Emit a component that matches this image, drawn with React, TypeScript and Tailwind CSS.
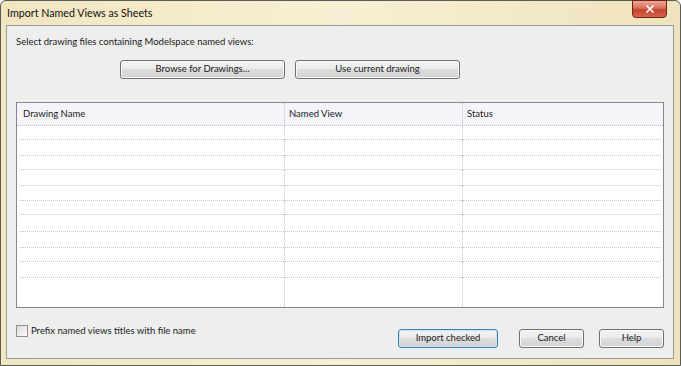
import { X } from 'lucide-react'

const rows = [14, 16, 14, 16, 15, 14, 17, 16, 14, 16]

function WinButton({ label, className = '', focused = false }: { label: string; className?: string; focused?: boolean }) {
  return (
    <div
      className={`h-[19px] rounded-[3px] border flex items-center justify-center text-[9.5px] text-[#1a1a1a] bg-[linear-gradient(#f4f4f4_0%,#ebebeb_45%,#dddddd_50%,#d2d2d2_100%)] ${
        focused ? 'border-[#3c7fb1] shadow-[inset_0_0_0_1px_#c8e6f8]' : 'border-[#707070] shadow-[inset_0_0_0_1px_#fbfbfb]'
      } ${className}`}
    >
      {label}
    </div>
  )
}

export default function App() {
  return (
    <div className="w-[681px] h-[366px] bg-white overflow-hidden" style={{ fontFamily: 'Lato, "Open Sans", sans-serif' }}>
      <div className="w-[681px] h-[366px] flex flex-col rounded-t-[6px] border border-[#5b5b5b] bg-[linear-gradient(90deg,#f1e6c0_0%,#f8f0d4_50%,#efe3bb_100%)]">
        {/* Title bar */}
        <div className="h-[24px] flex justify-between shrink-0">
          <span className="self-center pl-[6px] pt-[1px] text-[10.7px] text-[#111]">Import Named Views as Sheets</span>
          <div className="mr-[13px] w-[35px] h-[18px] -mt-px rounded-b-[4px] border border-[#6e2518] bg-[linear-gradient(#eaa896_0%,#d8705a_45%,#c4432c_55%,#d6654c_100%)] flex items-center justify-center">
            <X size={12} strokeWidth={3.5} className="text-white" />
          </div>
        </div>

        {/* Client area */}
        <div className="flex-1 ml-[5px] mr-[6px] mb-[6px] border border-[#9a9a9a] bg-[#eeeeee] flex flex-col px-[9px]">
          <p className="mt-[9px] h-[14px] leading-[14px] text-[9.5px] text-[#1a1a1a]">
            Select drawing files containing Modelspace named views:
          </p>

          <div className="mt-[11px] flex gap-[10px] pl-[104px]">
            <WinButton label="Browse for Drawings..." className="w-[165px]" />
            <WinButton label="Use current drawing" className="w-[165px]" />
          </div>

          {/* Table */}
          <div className="mt-[23px] h-[206px] border border-[#828790] bg-white flex flex-col">
            <div className="h-[23px] flex text-[9.5px] text-[#1a1a1a] bg-[#f4f4fa] border-b border-dotted border-[#bdbdc8] shrink-0">
              <div className="w-[267px] pl-[6px] flex items-center">Drawing Name</div>
              <div className="w-[178px] pl-[4px] flex items-center border-l border-dotted border-[#c4c4c4]">Named View</div>
              <div className="flex-1 pl-[4px] flex items-center border-l border-dotted border-[#c4c4c4]">Status</div>
            </div>
            <div className="flex-1 flex flex-col">
              {rows.map((h, i) => (
                <div key={i} className="flex" style={{ height: h }}>
                  <div className="w-[267px] pl-[3px]">
                    <div className="h-full border-b border-dotted border-[#c8c8c8]" />
                  </div>
                  <div className="w-[178px] border-l border-dotted border-[#c8c8c8]">
                    <div className="h-full border-b border-dotted border-[#c8c8c8]" />
                  </div>
                  <div className="flex-1 pr-[2px] border-l border-dotted border-[#c8c8c8]">
                    <div className="h-full border-b border-dotted border-[#c8c8c8]" />
                  </div>
                </div>
              ))}
              <div className="flex flex-1">
                <div className="w-[267px]" />
                <div className="w-[178px] border-l border-dotted border-[#c8c8c8]" />
                <div className="flex-1 border-l border-dotted border-[#c8c8c8]" />
              </div>
            </div>
          </div>

          {/* Bottom row */}
          <div className="mt-[16px] flex items-start">
            <div className="flex items-center gap-[3px] text-[9.5px] text-[#1a1a1a]">
              <div className="w-[12px] h-[12px] border border-[#8f8f8f] bg-[linear-gradient(135deg,#dcdcdc,#fafafa)]" />
              <span className="leading-[14px]">Prefix named views titles with file name</span>
            </div>
            <div className="ml-auto mt-[5px] flex">
              <WinButton label="Import checked" focused className="w-[100px]" />
              <WinButton label="Cancel" className="w-[65px] ml-[21px]" />
              <WinButton label="Help" className="w-[65px] ml-[15px]" />
            </div>
          </div>
        </div>
      </div>
    </div>
  )
}
